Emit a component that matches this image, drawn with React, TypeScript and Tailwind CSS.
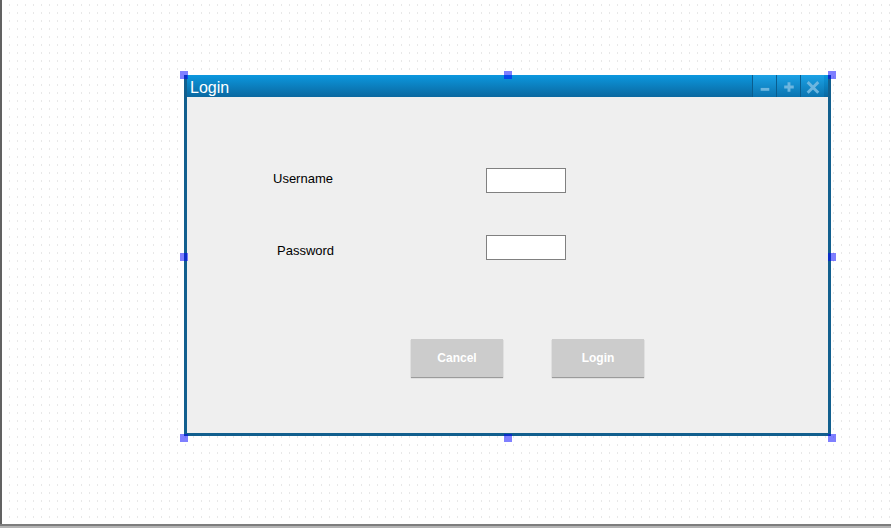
import React from 'react';

const handles: { left: number; top: number }[] = [
  { left: 182, top: 75 },
  { left: 506, top: 75 },
  { left: 830, top: 75 },
  { left: 182, top: 257 },
  { left: 830, top: 257 },
  { left: 182, top: 438 },
  { left: 506, top: 438 },
  { left: 830, top: 438 },
];

const TitleButton: React.FC<{ kind: 'min' | 'max' | 'close' }> = ({ kind }) => (
  <div className="flex h-full w-[24px] items-center justify-center border-l border-[#0a5d8e] bg-gradient-to-b from-[#1ba2e6] to-[#0b74b0]">
    <svg width="24" height="22" viewBox="0 0 24 22">
      {kind === 'min' && <rect x="8" y="13" width="9" height="3" fill="#6db6df" />}
      {kind === 'max' && (
        <path d="M11 7h3v3.5h3.5v3H14V17h-3v-3.5H7.5v-3H11z" fill="#6db6df" />
      )}
      {kind === 'close' && (
        <path
          d="M8 8l9 9M17 8l-9 9"
          stroke="#6db6df"
          strokeWidth="3"
          strokeLinecap="square"
        />
      )}
    </svg>
  </div>
);

export default function App() {
  return (
    <div className="flex h-[528px] w-[891px] flex-col overflow-hidden bg-white font-['Liberation_Sans',Arial,sans-serif]">
      <div className="relative flex-1 border-l-2 border-[#626262]">
        <svg className="absolute inset-0 h-full w-full">
          <defs>
            <pattern id="dots" width="8" height="8" patternUnits="userSpaceOnUse">
              <rect x="7" y="4" width="1" height="2" fill="#e8e8e8" />
            </pattern>
          </defs>
          <rect width="100%" height="100%" fill="url(#dots)" />
        </svg>

        {/* login window */}
        <div className="absolute left-[182px] top-[75px] flex h-[361px] w-[647px] flex-col border-[3px] border-t-0 border-[#125f8e]">
          <div className="flex h-[22px] items-stretch bg-gradient-to-b from-[#0c98df] to-[#0a68a0] pr-[4px]">
            <div className="flex-1 pl-[3px] pt-[3px] text-[16px] leading-[20px] text-white">Login</div>
            <TitleButton kind="min" />
            <TitleButton kind="max" />
            <TitleButton kind="close" />
          </div>

          <div className="flex flex-1 flex-col bg-[#efefef] pt-[71px] text-[13px] leading-[15px] text-black">
            <div className="flex items-start">
              <div className="ml-[86px] mt-[3px] w-[213px]">Username</div>
              <input type="text" className="h-[25px] w-[80px] border border-[#808080] bg-white outline-none" />
            </div>
            <div className="mt-[42px] flex items-start">
              <div className="ml-[90px] mt-[8px] w-[209px]">Password</div>
              <input type="password" className="h-[25px] w-[80px] border border-[#808080] bg-white outline-none" />
            </div>
            <div className="ml-[224px] mt-[79px] flex gap-[49px]">
              <button className="h-[38px] w-[92px] bg-[#cccccc] pt-[1px] text-[12px] font-bold text-white shadow-[0_1px_1px_rgba(0,0,0,0.35)]">
                Cancel
              </button>
              <button className="h-[38px] w-[92px] bg-[#cccccc] pt-[1px] text-[12px] font-bold text-white shadow-[0_1px_1px_rgba(0,0,0,0.35)]">
                Login
              </button>
            </div>
          </div>
        </div>

        {handles.map((h, i) => (
          <div
            key={i}
            className="absolute h-[8px] w-[8px] -translate-x-1/2 -translate-y-1/2 bg-[#0000ff]/50"
            style={{ left: h.left, top: h.top }}
          />
        ))}
      </div>
      <div className="h-[4px] border-t-2 border-[#7d7d7d] bg-[#b4b4b4]" />
    </div>
  );
}
